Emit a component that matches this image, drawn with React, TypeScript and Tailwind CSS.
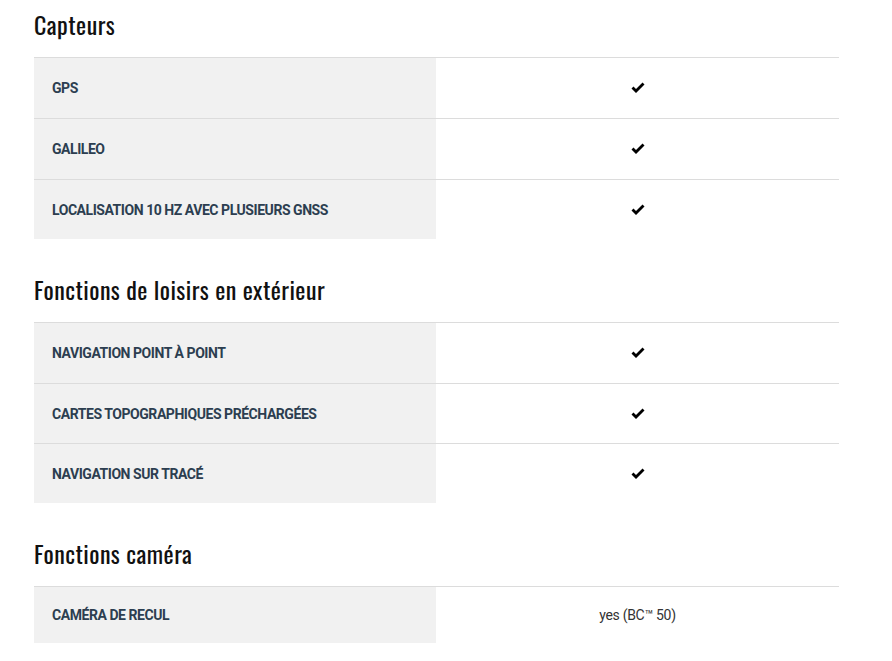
import React from "react";

type Row = { label: string; value?: string; h: string };
type Section = { title: string; rows: Row[] };

const sections: Section[] = [
  {
    title: "Capteurs",
    rows: [
      { label: "GPS", h: "h-[61px]" },
      { label: "GALILEO", h: "h-[61px]" },
      { label: "LOCALISATION 10 HZ AVEC PLUSIEURS GNSS", h: "h-[60px]" },
    ],
  },
  {
    title: "Fonctions de loisirs en extérieur",
    rows: [
      { label: "NAVIGATION POINT À POINT", h: "h-[61px]" },
      { label: "CARTES TOPOGRAPHIQUES PRÉCHARGÉES", h: "h-[60px]" },
      { label: "NAVIGATION SUR TRACÉ", h: "h-[60px]" },
    ],
  },
  {
    title: "Fonctions caméra",
    rows: [{ label: "CAMÉRA DE RECUL", value: "yes (BC™ 50)", h: "h-[57px]" }],
  },
];

function Check() {
  return (
    <svg width="14" height="12" viewBox="0 0 14 12" aria-hidden="true">
      <path d="M0.5 6.5 L2.5 4.6 L5 7 L11.5 0.5 L13.5 2.5 L5 11 Z" fill="#000" />
    </svg>
  );
}

export default function App() {
  return (
    <div className="bg-white w-[892px] h-[661px] overflow-hidden px-[34px] pt-[8px]" style={{ fontFamily: "Roboto, 'Liberation Sans', sans-serif" }}>
      {sections.map((s, i) => (
        <section key={s.title} className={i > 0 ? "mt-[34px]" : ""}>
          <h2
            className="text-[24px] leading-[32px] text-[#111] tracking-[0.45px] pb-[17px]"
            style={{ fontFamily: "'Oswald', 'DejaVu Sans Condensed', 'Liberation Sans Narrow', sans-serif" }}
          >
            {s.title}
          </h2>
          <div className="w-[805px]">
            {s.rows.map((r) => (
              <div key={r.label} className={`flex border-t border-[#dcdcdc] ${r.h}`}>
                <div className="w-[402px] bg-[#f1f1f1] flex items-center pl-[18px] pt-[1px] text-[14px] font-bold text-[#2c3e50] tracking-[-0.45px]">
                  {r.label}
                </div>
                <div className="flex-1 flex items-center justify-center text-[14px] text-[#333] tracking-[-0.3px]">
                  {r.value ? r.value : <Check />}
                </div>
              </div>
            ))}
          </div>
        </section>
      ))}
    </div>
  );
}
